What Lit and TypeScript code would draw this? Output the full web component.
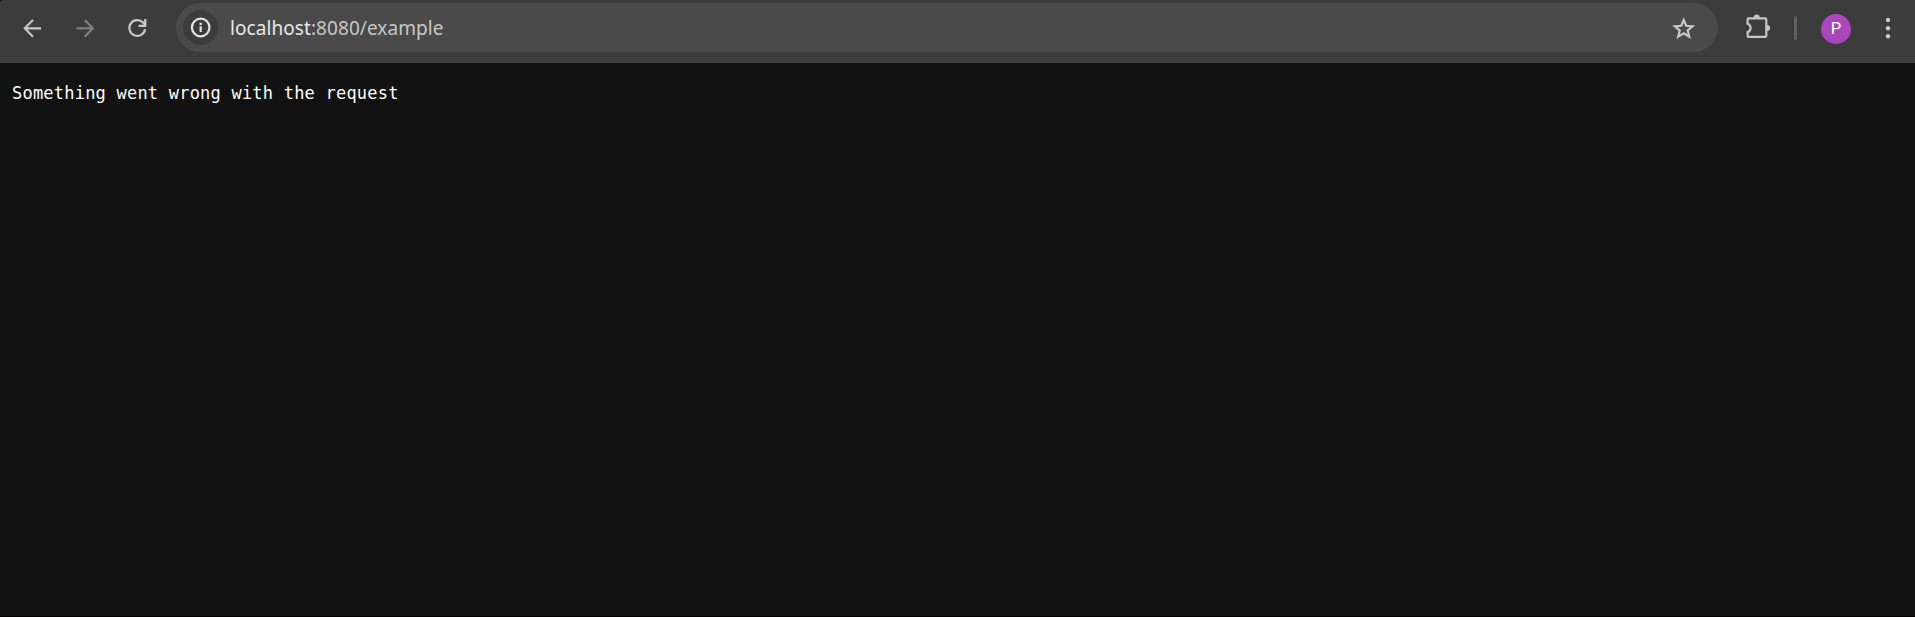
import { LitElement, html, css } from "lit";
import { customElement } from "lit/decorators.js";

@customElement("browser-toolbar")
class BrowserToolbar extends LitElement {
  static styles = css`
    :host { display: block; }
    .bar {
      box-sizing: border-box; height: 63px; display: flex; align-items: flex-start;
      background: #3c3c3c; border-bottom: 1px solid #494949; padding: 3px 11px 0 16px;
      border-top-left-radius: 3px; font-family: "Noto Sans", sans-serif;
    }
    svg { display: block; fill: none; stroke: #c7c7c7; stroke-width: 2.2; flex: none; }
    .nav { display: flex; gap: 20.5px; padding-top: 9px; width: 160px; box-sizing: border-box; flex: none; }
    .dim { stroke: #7f7f7f; }
    .address {
      flex: 1; height: 49px; border-radius: 25px; background: #4a4a4a; display: flex;
      align-items: center; padding: 0 17px 0 7px; box-sizing: border-box;
    }
    .site { width: 35px; height: 35px; border-radius: 50%; background: #3c3c3c; flex: none; }
    .site svg { stroke: #e3e3e3; }
    .url {
      flex: 1; margin-left: 12px; font-size: 19px; line-height: 26px; color: #c7c7c7;
      white-space: nowrap; letter-spacing: 0.07px;
    }
    .host { color: #e8e8e8; }
    .tools { width: 186px; height: 49px; display: flex; flex: none; }
    .ext { margin: 9px 0 0 22px; }
    .rule { width: 3px; height: 24px; border-radius: 2px; background: #606060; margin: 13px 0 0 19px; flex: none; }
    .avatar {
      width: 30px; height: 30px; border-radius: 50%; background: #ab47bc; color: #fff; font-family: Roboto, sans-serif;
      font-size: 16.5px; line-height: 30px; text-align: center; margin: 11px 0 0 24px; flex: none;
    }
    .menu { margin: 9px 0 0 29px; fill: #c7c7c7; stroke: none; }
  `;
  render() {
    return html`<div class="bar">
      <div class="nav">
        <svg width="32" height="32" viewBox="16 12 32 32"><path d="M41 28.3H25M33 19.9L24.8 28.3L33 36.7" /></svg>
        <svg class="dim" width="32" height="32" viewBox="68.5 12 32 32"><path d="M76 28.3H92M84.2 19.9L92.4 28.3L84.2 36.7" /></svg>
        <svg width="32" height="32" viewBox="121 12 32 32"><path d="M145.1 29.3A7.9 7.9 0 1 1 143.1 22.6L145 24.8M145.3 19V25.8H138.6" /></svg>
      </div>
      <div class="address">
        <div class="site">
          <svg width="35" height="35" viewBox="0 0 35 35">
            <circle cx="17.7" cy="17.5" r="8.8" /><path d="M17.7 16.3V22M17.7 12.7V15" />
          </svg>
        </div>
        <div class="url"><span class="host">localhost</span>:8080/example</div>
        <svg width="34" height="34" viewBox="1667 10.5 34 34"><path d="M1683.7 19.5L1686.2 25.3L1692.5 25.8L1687.7 29.9L1689.2 36.1L1683.7 32.8L1678.2 36.1L1679.7 29.9L1674.9 25.8L1681.2 25.3Z" /></svg>
      </div>
      <div class="tools">
        <svg class="ext" width="35" height="32" viewBox="1740 12 35 32">
          <path d="M1748.8 18.3H1765.2Q1766.3 18.3 1766.3 19.4V35.8Q1766.3 36.9 1765.2 36.9H1748.6Q1747.6 36.9 1747.6 35.9V32.1C1751.6 30.8 1751.6 25 1747.6 23.7V19.4Q1747.6 18.3 1748.8 18.3Z" />
          <path fill="#c7c7c7" stroke="none" d="M1753.7 17.9V17.5A3 3 0 0 1 1759.7 17.5V17.9ZM1767 24.9A3 3 0 0 1 1767 30.9Z" />
        </svg>
        <div class="rule"></div>
        <div class="avatar">P</div>
        <svg class="menu" width="16" height="32" viewBox="1880 12 16 32"><circle cx="1888" cy="20" r="2.2" /><circle cx="1888" cy="28.2" r="2.2" /><circle cx="1888" cy="36.3" r="2.2" /></svg>
      </div>
    </div>`;
  }
}

@customElement("app-root")
class AppRoot extends LitElement {
  static styles = css`
    :host { display: block; height: 617px; background: #121212; box-sizing: border-box; border-bottom: 1px solid #060006; overflow: hidden; }
    .message {
      margin: 0; padding: 19px 12px; color: #fff; font-family: "DejaVu Sans Mono", monospace;
      font-size: 17px; line-height: 22px; letter-spacing: 0.215px;
    }
  `;
  render() {
    return html`<browser-toolbar></browser-toolbar>
      <pre class="message">Something went wrong with the request</pre>`;
  }
}
